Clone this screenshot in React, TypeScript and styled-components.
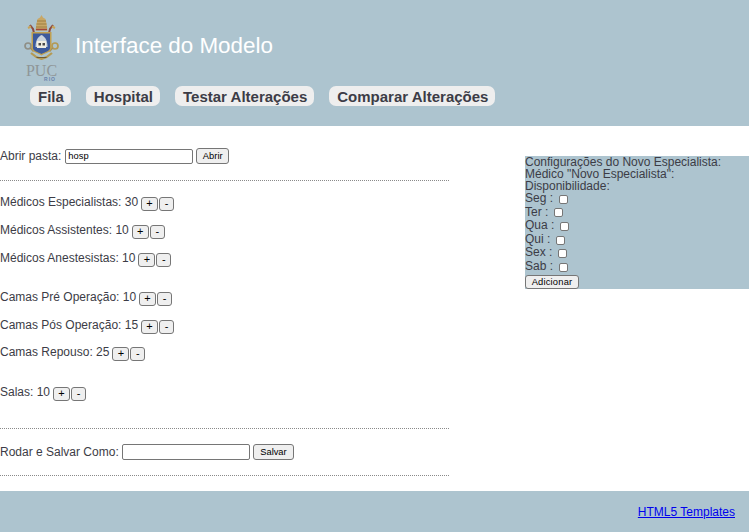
import React from "react";
import styled, { createGlobalStyle } from "styled-components";

const GlobalStyle = createGlobalStyle`
  html, body {
    margin: 0;
    padding: 0;
    background: #fff;
  }
  body {
    font-family: "Liberation Sans", Arial, sans-serif;
    font-size: 12px;
    color: #3c3c46;
  }
`;

const Page = styled.div`
  width: 749px;
  height: 532px;
  display: flex;
  flex-direction: column;
  overflow: hidden;
`;

const Header = styled.header`
  height: 126px;
  flex: none;
  background: #adc4cf;
  padding: 14px 0 0 23px;
  box-sizing: border-box;
`;

const Brand = styled.div`
  display: flex;
  height: 67px;
  gap: 15px;
`;

const LogoBox = styled.div`
  width: 37px;
  display: flex;
  flex-direction: column;
  align-items: center;
`;

const PucText = styled.span`
  font-family: "Liberation Serif", serif;
  font-size: 16px;
  line-height: 12px;
  color: #8f9698;
`;

const RioText = styled.span`
  font-size: 5px;
  font-weight: 700;
  line-height: 4px;
  letter-spacing: 1px;
  color: #6a83ac;
  align-self: flex-end;
  margin-right: 4px;
`;

const Title = styled.h1`
  margin: 16px 0 0;
  font-size: 22.4px;
  line-height: 32px;
  font-weight: 400;
  color: #fff;
`;

const Nav = styled.nav`
  display: flex;
  gap: 15px;
  margin: 5px 0 0 7px;
`;

const NavItem = styled.a`
  display: block;
  height: 20px;
  line-height: 21px;
  padding: 0 7px 0 8px;
  border-radius: 7px;
  background: #eeeeee;
  color: #3c3c46;
  font-size: 15px;
  font-weight: 700;
`;

const Main = styled.main`
  flex: 1;
  display: flex;
`;

const LeftColumn = styled.section`
  width: 449px;
  flex: none;
  padding-top: 22px;
`;

const Row = styled.div<{ $top?: number }>`
  display: flex;
  align-items: center;
  height: 16px;
  margin-top: ${(p) => p.$top ?? 0}px;
  line-height: 16px;
`;

const CounterList = styled.div`
  margin-top: 13px;
`;

const Divider = styled.hr<{ $top: number }>`
  border: 0;
  border-top: 1px dotted #8a8a8a;
  margin: ${(p) => p.$top}px 0 0;
  height: 0;
`;

const Label = styled.span`
  margin-right: 3px;
`;

const TextInput = styled.input<{ $height: number; $left: number }>`
  box-sizing: border-box;
  width: 128px;
  height: ${(p) => p.$height}px;
  margin: 0 3px 0 ${(p) => p.$left}px;
  padding: 1px 2px;
  border: 1px solid #767676;
  border-radius: 2px;
  background: #fff;
  font-family: "Liberation Sans", Arial, sans-serif;
  font-size: 9.33px;
  color: #000;
  outline: none;
`;

const Button = styled.button<{ $pad?: number }>`
  box-sizing: border-box;
  height: 16px;
  margin: 0;
  padding: 0 ${(p) => p.$pad ?? 6}px;
  border: 1px solid #767676;
  border-radius: 3px;
  background: #efefef;
  font-family: "Liberation Sans", Arial, sans-serif;
  font-size: 9.33px;
  line-height: 13px;
  color: #000;
`;

const StepButton = styled(Button)<{ $width: number }>`
  width: ${(p) => p.$width}px;
  height: 14px;
  padding: 0;
  margin: 3px 0 0 0;
  font-size: 11px;
  line-height: 11px;
`;

const StepGroup = styled.div`
  display: flex;
  gap: 1px;
`;

const SidePanel = styled.aside`
  width: 224px;
  height: 133px;
  margin: 30px 0 0 76px;
  background: #adc4cf;
  font-size: 12px;
  line-height: 12px;
`;

const DayRow = styled.label`
  display: flex;
  align-items: center;
  height: 13.6px;
  line-height: 13.6px;
`;

const DayCheck = styled.input`
  appearance: none;
  box-sizing: border-box;
  width: 9px;
  height: 9px;
  margin: 1px 0 0 6px;
  border: 1px solid #767676;
  border-radius: 2px;
  background: #fff;
`;

const AddButton = styled(Button)`
  display: block;
  width: 54px;
  height: 14px;
  padding: 0;
  margin-top: 1.5px;
  letter-spacing: 0.2px;
`;

const Footer = styled.footer`
  height: 41px;
  flex: none;
  background: #adc4cf;
  display: flex;
  justify-content: flex-end;
  align-items: center;
  padding-right: 14px;
`;

const FooterLink = styled.a`
  color: #0000ee;
  text-decoration: underline;
  font-size: 12px;
`;

const Crest: React.FC = () => (
  <svg width="37" height="51" viewBox="0 0 37 51">
    {/* tiara */}
    <path d="M18.500 1l1.500 2.500 2.500 1.500 1 4.500 1 7h-12l1-7 1-4.500 2.500-1.500z" fill="#c8a766" />
    <path d="M14 7h9M13.500 10h10M13 13h11" stroke="#9d7f42" strokeWidth="1" />
    <path d="M13 15.500h11" stroke="#a0463a" strokeWidth="1.500" />
    {/* crossed keys */}
    <path d="M7 11l3 4 1 4M30 11l-3 4-1 4" stroke="#8d4a40" strokeWidth="2" fill="none" />
    <path d="M5 14l3-1.500M32 14l-3-1.500" stroke="#c7a45a" strokeWidth="2" fill="none" />
    <circle cx="5" cy="32" r="3" fill="none" stroke="#8f8f86" strokeWidth="1.700" />
    <circle cx="32" cy="32" r="3" fill="none" stroke="#b39a55" strokeWidth="1.700" />
    <path d="M7.500 34l3 3.500M29.500 34l-3 3.500" stroke="#a28d58" strokeWidth="1.500" />
    {/* shield */}
    <path d="M8.500 18h20v16c0 4-6 5-10 7.500-4-2.500-10-3.500-10-7.500z" fill="#c0a050" />
    <path d="M10 19.500h17v14.500c0 3-5 4-8.500 6-3.500-2-8.500-3-8.500-6z" fill="#3c5a9c" />
    <path d="M18.500 21c4 2 6 6 6 12h-12c0-6 2-10 6-12z" fill="#c9d3dc" />
    <rect x="14" y="27" width="9" height="7" fill="#f1eee2" />
    <path d="M15.500 29h2.500v2.500h-2.500zM19.500 29h2.500v2.500h-2.500z" fill="#4b4a4a" />
    {/* ribbon */}
    <path d="M8 39c4 4 7 5 10.500 6 3.500-1 6.500-2 10.500-6" stroke="#b59a52" strokeWidth="2" fill="none" />
    <path d="M13.500 43.500h10" stroke="#6f5b35" strokeWidth="1" />
  </svg>
);

const counters = [
  { label: "Médicos Especialistas: 30", top: 0 },
  { label: "Médicos Assistentes: 10", top: 12 },
  { label: "Médicos Anestesistas: 10", top: 12 },
  { label: "Camas Pré Operação: 10", top: 23 },
  { label: "Camas Pós Operação: 15", top: 12 },
  { label: "Camas Repouso: 25", top: 11 },
  { label: "Salas: 10", top: 24 },
];

const days = ["Seg", "Ter", "Qua", "Qui", "Sex", "Sab"];

const navItems = ["Fila", "Hospital", "Testar Alterações", "Comparar Alterações"];

export default function App() {
  return (
    <Page>
      <GlobalStyle />
      <Header>
        <Brand>
          <LogoBox>
            <Crest />
            <PucText>PUC</PucText>
            <RioText>RIO</RioText>
          </LogoBox>
          <Title>Interface do Modelo</Title>
        </Brand>
        <Nav>
          {navItems.map((item) => (
            <NavItem key={item}>{item}</NavItem>
          ))}
        </Nav>
      </Header>
      <Main>
        <LeftColumn>
          <Row>
            <Label>Abrir pasta:</Label>
            <TextInput $height={15} $left={1} defaultValue="hosp" />
            <Button $pad={5.5}>Abrir</Button>
          </Row>
          <Divider $top={16} />
          <CounterList>
            {counters.map((c) => (
              <Row key={c.label} $top={c.top}>
                <Label>{c.label}</Label>
                <StepGroup>
                  <StepButton $width={17}>+</StepButton>
                  <StepButton $width={15}>-</StepButton>
                </StepGroup>
              </Row>
            ))}
          </CounterList>
          <Divider $top={28} />
          <Row $top={15}>
            <Label>Rodar e Salvar Como:</Label>
            <TextInput $height={16} $left={0} />
            <Button $pad={6.5}>Salvar</Button>
          </Row>
          <Divider $top={15} />
        </LeftColumn>
        <SidePanel>
          <div>Configurações do Novo Especialista:</div>
          <div>Médico "Novo Especialista":</div>
          <div>Disponibilidade:</div>
          {days.map((d) => (
            <DayRow key={d}>
              {d} :
              <DayCheck type="checkbox" />
            </DayRow>
          ))}
          <AddButton>Adicionar</AddButton>
        </SidePanel>
      </Main>
      <Footer>
        <FooterLink href="#">HTML5 Templates</FooterLink>
      </Footer>
    </Page>
  );
}
